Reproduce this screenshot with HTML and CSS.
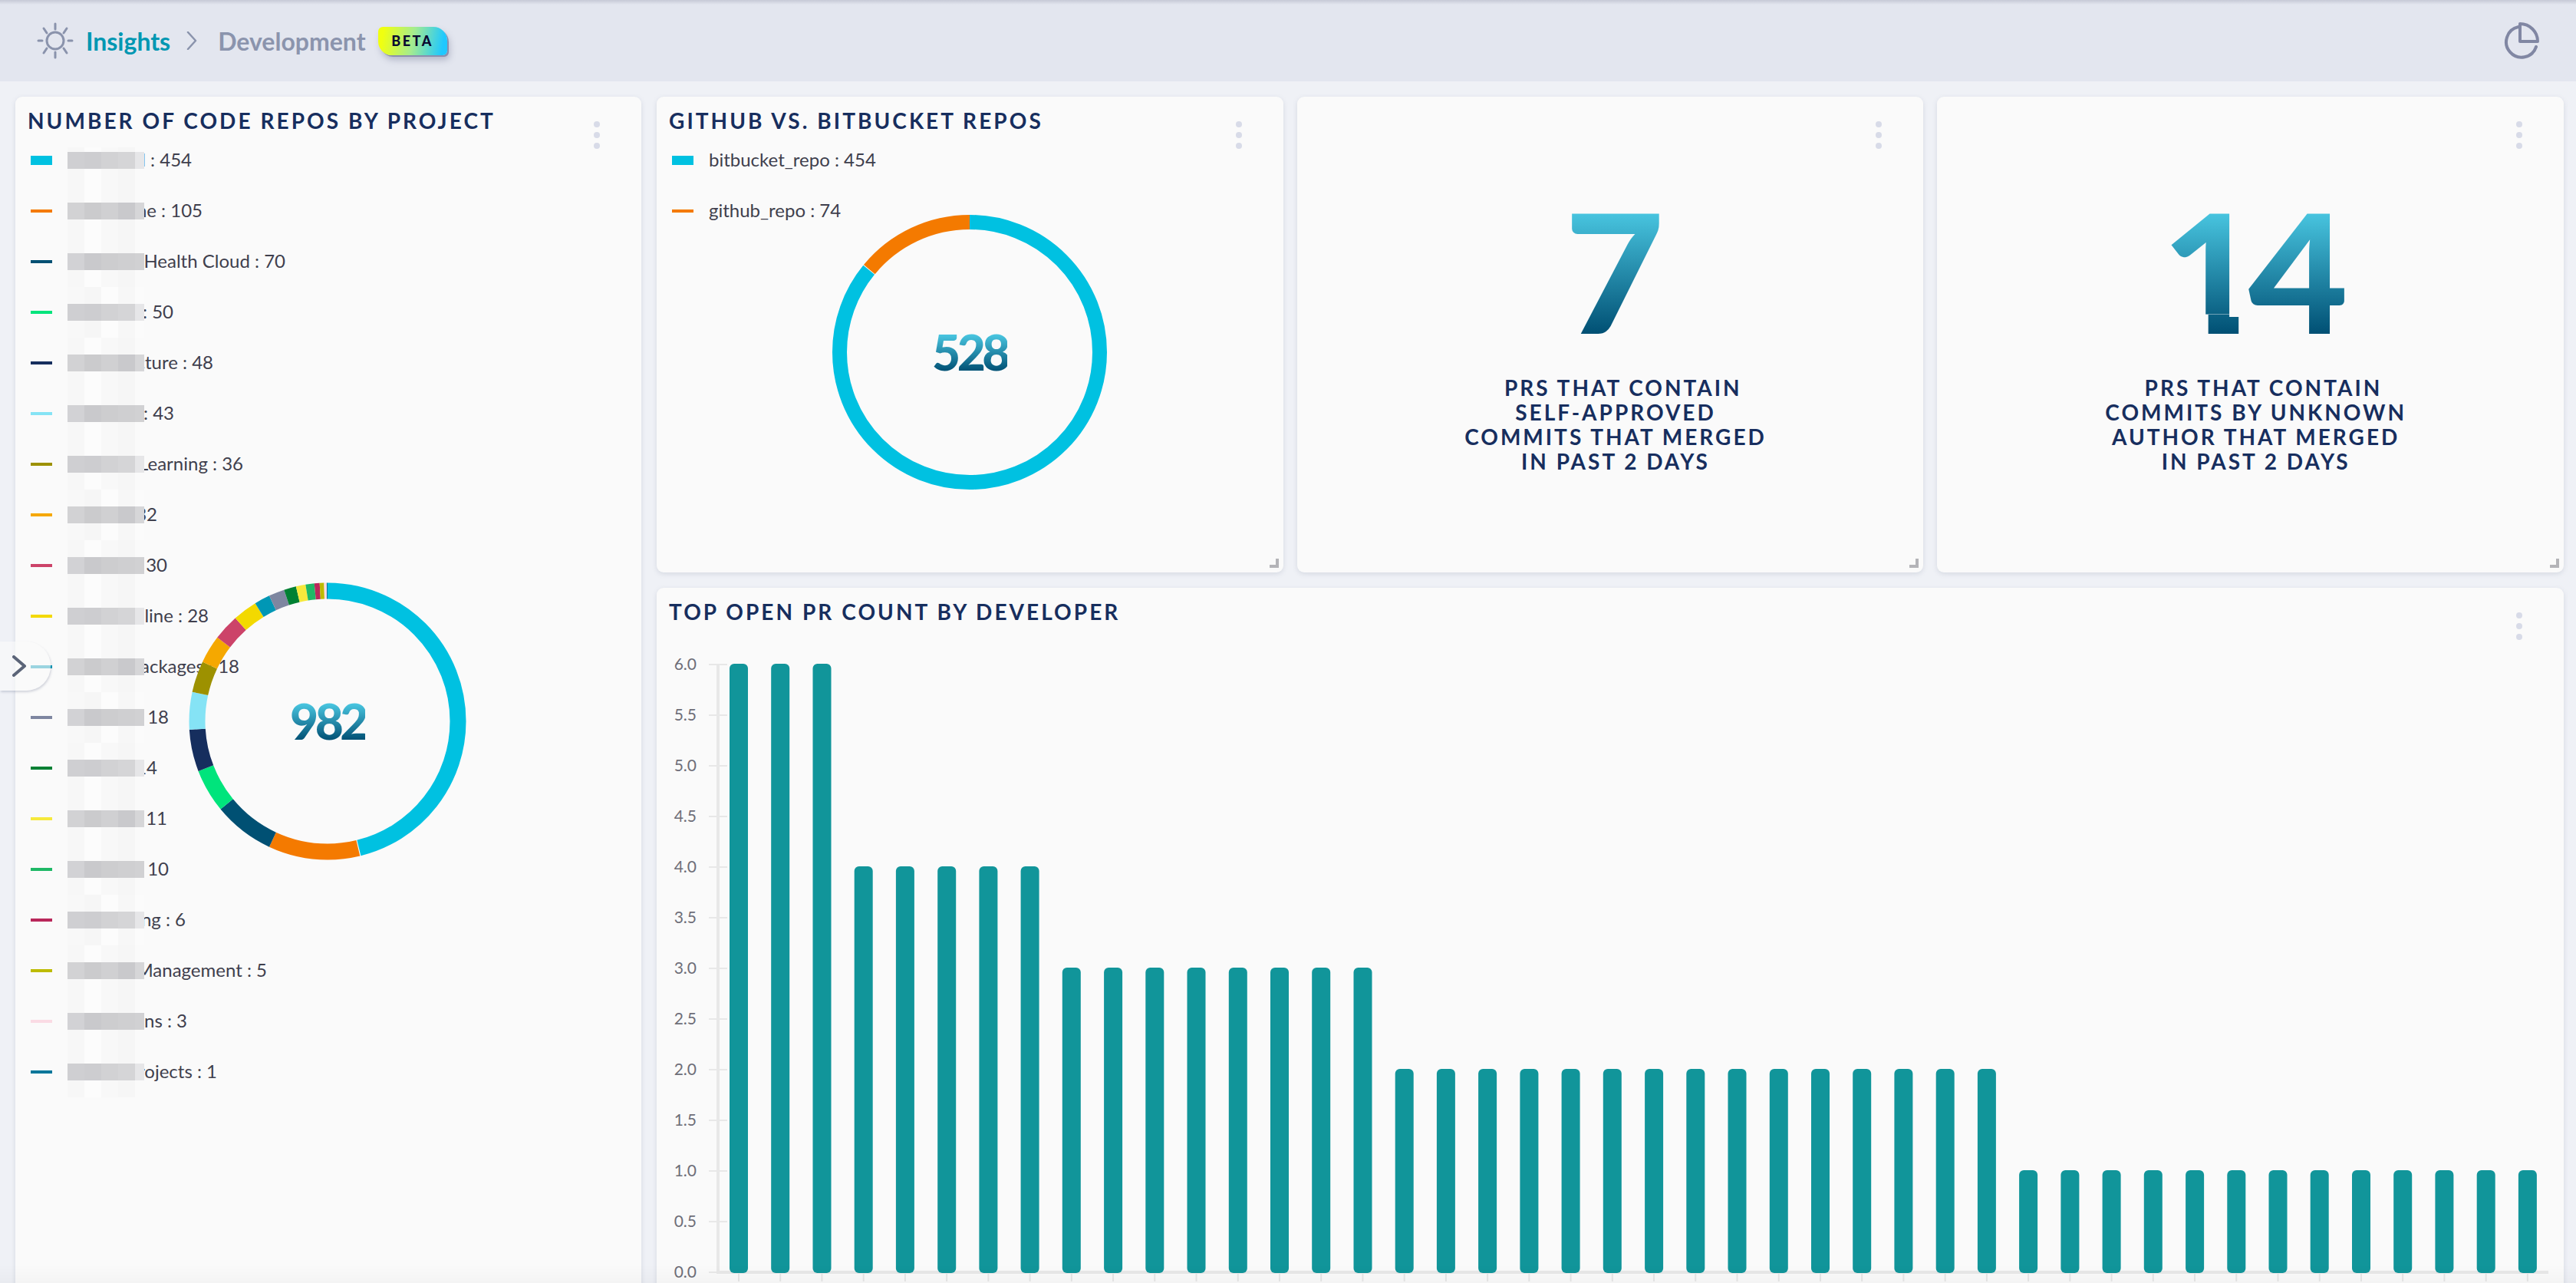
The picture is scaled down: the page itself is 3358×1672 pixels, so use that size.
FILE: index.html
```html
<!DOCTYPE html>
<html lang="en">
<head>
    <meta charset="UTF-8">
    <meta name="viewport" content="width=device-width, initial-scale=1.0">
    <title>Insights - Development</title>
    <link rel="stylesheet" href="styles.css">
</head>
<body>
<header class="topbar">
    <nav class="crumbs">
        <svg class="sun-icon" viewBox="0 0 48 48" fill="none" stroke="#8a93ac" stroke-width="3" stroke-linecap="round">
            <circle cx="24" cy="24" r="11"/>
            <path d="M24 2v7M24 39v7M2 24h5M41 24h5M9 8l4 6M39 8l-4 6M9 40l4-6M39 40l-4-6"/>
        </svg>
        <a class="crumb-link">Insights</a>
        <svg class="crumb-sep" viewBox="0 0 14 24" fill="none" stroke="#8a93ac" stroke-width="2.5" stroke-linecap="round" stroke-linejoin="round">
            <path d="M2 1l10 11L2 23"/>
        </svg>
        <span class="crumb-current">Development</span>
        <span class="beta-badge">BETA</span>
    </nav>
    <svg class="pie-icon" viewBox="0 0 48 48" fill="none" stroke="#8187a3" stroke-width="4" stroke-linecap="round" stroke-linejoin="round">
        <path d="M21 6A20 20 0 1 0 44 32"/>
        <path d="M23 2v23h23A23 23 0 0 0 23 2z"/>
    </svg>
</header>

<main class="dashboard">
    <section class="card card-projects">
        <h2 class="card-title">Number of code repos by project</h2>
        <div class="kebab"><i></i><i></i><i></i></div>
        <ul class="legend">
            <li class="legend-row"><span class="swatch swatch-first c1"></span><span class="legend-text">d : 454</span><span class="mask"></span></li>
            <li class="legend-row"><span class="swatch c2"></span><span class="legend-text">ne : 105</span><span class="mask"></span></li>
            <li class="legend-row"><span class="swatch c3"></span><span class="legend-text">Health Cloud : 70</span><span class="mask"></span></li>
            <li class="legend-row"><span class="swatch c4"></span><span class="legend-text">: 50</span><span class="mask"></span></li>
            <li class="legend-row"><span class="swatch c5"></span><span class="legend-text">cture : 48</span><span class="mask"></span></li>
            <li class="legend-row"><span class="swatch c6"></span><span class="legend-text">: 43</span><span class="mask"></span></li>
            <li class="legend-row"><span class="swatch c7"></span><span class="legend-text">Learning : 36</span><span class="mask"></span></li>
            <li class="legend-row"><span class="swatch c8"></span><span class="legend-text">: 32</span><span class="mask"></span></li>
            <li class="legend-row"><span class="swatch c9"></span><span class="legend-text">: 30</span><span class="mask"></span></li>
            <li class="legend-row"><span class="swatch c10"></span><span class="legend-text">eline : 28</span><span class="mask"></span></li>
            <li class="legend-row"><span class="swatch c11"></span><span class="legend-text">ackages : 18</span><span class="mask"></span></li>
            <li class="legend-row"><span class="swatch c12"></span><span class="legend-text">: 18</span><span class="mask"></span></li>
            <li class="legend-row"><span class="swatch c13"></span><span class="legend-text">: 14</span><span class="mask"></span></li>
            <li class="legend-row"><span class="swatch c14"></span><span class="legend-text">: 11</span><span class="mask"></span></li>
            <li class="legend-row"><span class="swatch c15"></span><span class="legend-text">: 10</span><span class="mask"></span></li>
            <li class="legend-row"><span class="swatch c16"></span><span class="legend-text">ng : 6</span><span class="mask"></span></li>
            <li class="legend-row"><span class="swatch c17"></span><span class="legend-text">Management : 5</span><span class="mask"></span></li>
            <li class="legend-row"><span class="swatch c18"></span><span class="legend-text">ns : 3</span><span class="mask"></span></li>
            <li class="legend-row"><span class="swatch c19"></span><span class="legend-text">rojects : 1</span><span class="mask"></span></li>
        </ul>
        <div class="donut donut-projects">
            <svg viewBox="0 0 362 362" fill="none" stroke-width="21">
                <g transform="rotate(-90 181 181)">
                    <circle cx="181" cy="181" r="170" pathLength="982" stroke="#00c1e1" stroke-dasharray="453 982"/>
                    <circle cx="181" cy="181" r="170" pathLength="982" stroke="#f47a00" stroke-dasharray="105 982" stroke-dashoffset="-454"/>
                    <circle cx="181" cy="181" r="170" pathLength="982" stroke="#005073" stroke-dasharray="70 982" stroke-dashoffset="-559"/>
                    <circle cx="181" cy="181" r="170" pathLength="982" stroke="#00e47c" stroke-dasharray="50 982" stroke-dashoffset="-629"/>
                    <circle cx="181" cy="181" r="170" pathLength="982" stroke="#162e5e" stroke-dasharray="48 982" stroke-dashoffset="-679"/>
                    <circle cx="181" cy="181" r="170" pathLength="982" stroke="#85e3f5" stroke-dasharray="43 982" stroke-dashoffset="-727"/>
                    <circle cx="181" cy="181" r="170" pathLength="982" stroke="#9d9100" stroke-dasharray="36 982" stroke-dashoffset="-770"/>
                    <circle cx="181" cy="181" r="170" pathLength="982" stroke="#f5a800" stroke-dasharray="32 982" stroke-dashoffset="-806"/>
                    <circle cx="181" cy="181" r="170" pathLength="982" stroke="#cc4369" stroke-dasharray="30 982" stroke-dashoffset="-838"/>
                    <circle cx="181" cy="181" r="170" pathLength="982" stroke="#f3d900" stroke-dasharray="28 982" stroke-dashoffset="-868"/>
                    <circle cx="181" cy="181" r="170" pathLength="982" stroke="#0097b5" stroke-dasharray="18 982" stroke-dashoffset="-896"/>
                    <circle cx="181" cy="181" r="170" pathLength="982" stroke="#7e86a0" stroke-dasharray="18 982" stroke-dashoffset="-914"/>
                    <circle cx="181" cy="181" r="170" pathLength="982" stroke="#008033" stroke-dasharray="14 982" stroke-dashoffset="-932"/>
                    <circle cx="181" cy="181" r="170" pathLength="982" stroke="#f6e93c" stroke-dasharray="11 982" stroke-dashoffset="-946"/>
                    <circle cx="181" cy="181" r="170" pathLength="982" stroke="#1eb866" stroke-dasharray="10 982" stroke-dashoffset="-957"/>
                    <circle cx="181" cy="181" r="170" pathLength="982" stroke="#b9275a" stroke-dasharray="6 982" stroke-dashoffset="-967"/>
                    <circle cx="181" cy="181" r="170" pathLength="982" stroke="#bdbb00" stroke-dasharray="5 982" stroke-dashoffset="-973"/>
                    <circle cx="181" cy="181" r="170" pathLength="982" stroke="#fadbe4" stroke-dasharray="3 982" stroke-dashoffset="-978"/>
                    <circle cx="181" cy="181" r="170" pathLength="982" stroke="#00769a" stroke-dasharray="1 982" stroke-dashoffset="-981"/>
                </g>
            </svg>
            <span class="donut-value gradient-text">982</span>
        </div>
    </section>

    <div class="right-grid">
        <section class="card">
            <h2 class="card-title">GitHub vs. Bitbucket repos</h2>
            <div class="kebab"><i></i><i></i><i></i></div>
            <ul class="legend">
                <li class="legend-row"><span class="swatch swatch-first c1"></span><span class="legend-plain">bitbucket_repo : 454</span></li>
                <li class="legend-row"><span class="swatch c2"></span><span class="legend-plain">github_repo : 74</span></li>
            </ul>
            <div class="donut donut-repos">
                <svg viewBox="0 0 362 362" fill="none" stroke-width="19">
                    <g transform="rotate(-90 181 181)">
                        <circle cx="181" cy="181" r="169.5" pathLength="528" stroke="#00c1e1" stroke-dasharray="453.5 528"/>
                        <circle cx="181" cy="181" r="169.5" pathLength="528" stroke="#f47a00" stroke-dasharray="74 528" stroke-dashoffset="-454"/>
                    </g>
                </svg>
                <span class="donut-value gradient-text">528</span>
            </div>
            <span class="resize-handle"></span>
        </section>

        <section class="card stat-card">
            <div class="kebab"><i></i><i></i><i></i></div>
            <div class="stat-number"><span class="gradient-text">7</span></div>
            <p class="stat-label">&nbsp;&nbsp;PRs that contain<br>self-approved<br>commits that merged<br>in past 2 days</p>
            <span class="resize-handle"></span>
        </section>

        <section class="card stat-card">
            <div class="kebab"><i></i><i></i><i></i></div>
            <div class="stat-number"><span class="gradient-text digit-one">1</span><span class="gradient-text">4</span></div>
            <p class="stat-label">&nbsp;&nbsp;PRs that contain<br>commits by unknown<br>author that merged<br>in past 2 days</p>
            <span class="resize-handle"></span>
        </section>

        <section class="card card-wide">
            <h2 class="card-title">Top open PR count by developer</h2>
            <div class="kebab"><i></i><i></i><i></i></div>
            <!-- viewBox uses page coordinates so the bars are easy to check against the design -->
            <svg class="bar-chart" viewBox="856 846 2486 826">
                <defs>
                    <pattern id="xTicks" x="962" y="1660" width="54.23" height="10" patternUnits="userSpaceOnUse">
                        <rect width="2" height="10" fill="#e6e6e6"/>
                    </pattern>
                </defs>
                <rect x="934" y="866" width="4" height="794" fill="#e8e8e8"/>
                <rect x="934" y="1656" width="2388" height="4" fill="#e8e8e8"/>
                <rect x="950" y="1660" width="2350" height="10" fill="url(#xTicks)"/>
                <g class="y-ticks">
                    <rect x="924" y="865" width="24" height="2"/><rect x="924" y="931" width="24" height="2"/><rect x="924" y="997" width="24" height="2"/>
                    <rect x="924" y="1063" width="24" height="2"/><rect x="924" y="1129" width="24" height="2"/><rect x="924" y="1195" width="24" height="2"/>
                    <rect x="924" y="1261" width="24" height="2"/><rect x="924" y="1327" width="24" height="2"/><rect x="924" y="1393" width="24" height="2"/>
                    <rect x="924" y="1459" width="24" height="2"/><rect x="924" y="1525" width="24" height="2"/><rect x="924" y="1591" width="24" height="2"/>
                    <rect x="924" y="1657" width="24" height="2"/>
                </g>
                <g class="y-labels">
                    <text x="908" y="873">6.0</text><text x="908" y="939">5.5</text><text x="908" y="1005">5.0</text>
                    <text x="908" y="1071">4.5</text><text x="908" y="1137">4.0</text><text x="908" y="1203">3.5</text>
                    <text x="908" y="1269">3.0</text><text x="908" y="1335">2.5</text><text x="908" y="1401">2.0</text>
                    <text x="908" y="1467">1.5</text><text x="908" y="1533">1.0</text><text x="908" y="1599">0.5</text>
                    <text x="908" y="1665">0.0</text>
                </g>
                <g class="bars">
                    <rect x="951.0" y="865" width="24" height="794" rx="6"/>
                    <rect x="1005.2" y="865" width="24" height="794" rx="6"/>
                    <rect x="1059.5" y="865" width="24" height="794" rx="6"/>
                    <rect x="1113.7" y="1129" width="24" height="530" rx="6"/>
                    <rect x="1167.9" y="1129" width="24" height="530" rx="6"/>
                    <rect x="1222.2" y="1129" width="24" height="530" rx="6"/>
                    <rect x="1276.4" y="1129" width="24" height="530" rx="6"/>
                    <rect x="1330.6" y="1129" width="24" height="530" rx="6"/>
                    <rect x="1384.8" y="1261" width="24" height="398" rx="6"/>
                    <rect x="1439.1" y="1261" width="24" height="398" rx="6"/>
                    <rect x="1493.3" y="1261" width="24" height="398" rx="6"/>
                    <rect x="1547.5" y="1261" width="24" height="398" rx="6"/>
                    <rect x="1601.8" y="1261" width="24" height="398" rx="6"/>
                    <rect x="1656.0" y="1261" width="24" height="398" rx="6"/>
                    <rect x="1710.2" y="1261" width="24" height="398" rx="6"/>
                    <rect x="1764.5" y="1261" width="24" height="398" rx="6"/>
                    <rect x="1818.7" y="1393" width="24" height="266" rx="6"/>
                    <rect x="1872.9" y="1393" width="24" height="266" rx="6"/>
                    <rect x="1927.1" y="1393" width="24" height="266" rx="6"/>
                    <rect x="1981.4" y="1393" width="24" height="266" rx="6"/>
                    <rect x="2035.6" y="1393" width="24" height="266" rx="6"/>
                    <rect x="2089.8" y="1393" width="24" height="266" rx="6"/>
                    <rect x="2144.1" y="1393" width="24" height="266" rx="6"/>
                    <rect x="2198.3" y="1393" width="24" height="266" rx="6"/>
                    <rect x="2252.5" y="1393" width="24" height="266" rx="6"/>
                    <rect x="2306.8" y="1393" width="24" height="266" rx="6"/>
                    <rect x="2361.0" y="1393" width="24" height="266" rx="6"/>
                    <rect x="2415.2" y="1393" width="24" height="266" rx="6"/>
                    <rect x="2469.4" y="1393" width="24" height="266" rx="6"/>
                    <rect x="2523.7" y="1393" width="24" height="266" rx="6"/>
                    <rect x="2577.9" y="1393" width="24" height="266" rx="6"/>
                    <rect x="2632.1" y="1525" width="24" height="134" rx="6"/>
                    <rect x="2686.4" y="1525" width="24" height="134" rx="6"/>
                    <rect x="2740.6" y="1525" width="24" height="134" rx="6"/>
                    <rect x="2794.8" y="1525" width="24" height="134" rx="6"/>
                    <rect x="2849.1" y="1525" width="24" height="134" rx="6"/>
                    <rect x="2903.3" y="1525" width="24" height="134" rx="6"/>
                    <rect x="2957.5" y="1525" width="24" height="134" rx="6"/>
                    <rect x="3011.7" y="1525" width="24" height="134" rx="6"/>
                    <rect x="3066.0" y="1525" width="24" height="134" rx="6"/>
                    <rect x="3120.2" y="1525" width="24" height="134" rx="6"/>
                    <rect x="3174.4" y="1525" width="24" height="134" rx="6"/>
                    <rect x="3228.7" y="1525" width="24" height="134" rx="6"/>
                    <rect x="3282.9" y="1525" width="24" height="134" rx="6"/>
                </g>
            </svg>
        </section>
    </div>
</main>

<button class="sidebar-toggle" type="button">
    <svg viewBox="0 0 20 28" fill="none" stroke="#5b6478" stroke-width="4" stroke-linecap="round" stroke-linejoin="round">
        <path d="M2 2l14 12L2 26"/>
    </svg>
</button>
</body>
</html>
```

FILE: styles.css
```css
* {
    box-sizing: border-box;
}

html, body {
    height: 100%;
}

body {
    margin: 0;
    overflow: hidden;
    background-color: #eff1f6;
    font-family: "Lato", "Noto Sans", sans-serif;
    color: #3f3f4d;
}

/* Slight fade along the bottom edge of the window */
body::after {
    content: "";
    position: fixed;
    left: 0;
    right: 0;
    bottom: 0;
    height: 24px;
    background: linear-gradient(rgba(0, 0, 0, 0), rgba(0, 0, 0, 0.025));
    pointer-events: none;
}

/* Top bar */
.topbar {
    height: 106px;
    padding: 0 48px 0 48px;
    display: flex;
    align-items: center;
    justify-content: space-between;
    background: linear-gradient(#c6c9d6 0, #e3e6ef 6px);
}

.crumbs {
    display: flex;
    align-items: center;
    font-size: 32px;
    font-weight: 700;
}

.sun-icon {
    width: 48px;
    height: 48px;
    margin-right: 16px;
}

.crumb-link {
    color: #0097b2;
}

.crumb-sep {
    width: 14px;
    height: 24px;
    margin: 0 27px 0 21px;
}

.crumb-current {
    color: #8b94ad;
}

.beta-badge {
    margin-left: 16px;
    width: 90px;
    height: 37px;
    display: flex;
    align-items: center;
    justify-content: center;
    font-size: 18px;
    font-weight: 900;
    letter-spacing: 0.14em;
    color: #0a0a30;
    border-radius: 6px 18px 6px 18px;
    background: linear-gradient(100deg, #f0ff10 8%, #a4ec90 50%, #1fc8ff 92%);
    box-shadow: 2px 2px 0 #8a8fae, 3px 6px 8px rgba(90, 95, 130, 0.35);
}

.pie-icon {
    width: 48px;
    height: 48px;
}

/* Page grid */
.dashboard {
    display: grid;
    grid-template-columns: 816px 1fr;
    gap: 20px;
    padding: 20px 16px 0 20px;
}

.right-grid {
    display: grid;
    grid-template-columns: repeat(3, 1fr);
    grid-template-rows: 620px 940px;
    column-gap: 18px;
    row-gap: 20px;
}

.card {
    position: relative;
    background-color: #fafafa;
    border-radius: 9px;
    box-shadow: 0 2px 6px rgba(100, 110, 140, 0.18);
}

.card-projects {
    height: 1600px;
}

.card-wide {
    grid-column: 1 / 4;
}

.card-title {
    margin: 0;
    padding: 14px 16px 0;
    font-size: 28px;
    line-height: 34px;
    font-weight: 700;
    letter-spacing: 3.05px;
    text-transform: uppercase;
    color: #172e5e;
}

.kebab {
    position: absolute;
    top: 32px;
    right: 54px;
    display: flex;
    flex-direction: column;
    gap: 6px;
}

.kebab i {
    width: 8px;
    height: 8px;
    border-radius: 50%;
    background-color: #d8dbe8;
}

.resize-handle {
    position: absolute;
    right: 6px;
    bottom: 6px;
    width: 12px;
    height: 12px;
    border-right: 4px solid #b4b4b8;
    border-bottom: 4px solid #b4b4b8;
}

/* Legends */
.legend {
    list-style: none;
    margin: 2px 0 0 20px;
    padding: 0;
}

.legend-row {
    position: relative;
    height: 66px;
    display: flex;
    align-items: center;
    font-size: 24px;
}

.swatch {
    flex: none;
    width: 28px;
    height: 4px;
    margin-right: 20px;
}

.swatch-first {
    height: 12px;
}

.c1 { background-color: #00c1e1; }
.c2 { background-color: #f47a00; }
.c3 { background-color: #005073; }
.c4 { background-color: #00e47c; }
.c5 { background-color: #162e5e; }
.c6 { background-color: #85e3f5; }
.c7 { background-color: #9d9100; }
.c8 { background-color: #f5a800; }
.c9 { background-color: #cc4369; }
.c10 { background-color: #f3d900; }
.c11 { background-color: #0097b5; }
.c12 { background-color: #7e86a0; }
.c13 { background-color: #008033; }
.c14 { background-color: #f6e93c; }
.c15 { background-color: #1eb866; }
.c16 { background-color: #b9275a; }
.c17 { background-color: #bdbb00; }
.c18 { background-color: #fadbe4; }
.c19 { background-color: #00769a; }

.legend-plain {
    margin-top: -4px;
    white-space: nowrap;
}

/* Text is right aligned so each row ends where the visible part of its label ends */
.legend-text {
    margin-top: -4px;
    text-align: right;
    white-space: nowrap;
}

.legend-row:nth-child(1) .legend-text { width: 162px; }
.legend-row:nth-child(2) .legend-text { width: 176px; }
.legend-row:nth-child(3) .legend-text { width: 284px; }
.legend-row:nth-child(4) .legend-text { width: 138px; }
.legend-row:nth-child(5) .legend-text { width: 190px; }
.legend-row:nth-child(6) .legend-text { width: 139px; }
.legend-row:nth-child(7) .legend-text { width: 229px; }
.legend-row:nth-child(8) .legend-text { width: 117px; }
.legend-row:nth-child(9) .legend-text { width: 130px; }
.legend-row:nth-child(10) .legend-text { width: 184px; }
.legend-row:nth-child(11) .legend-text { width: 224px; }
.legend-row:nth-child(12) .legend-text { width: 132px; }
.legend-row:nth-child(13) .legend-text { width: 117px; }
.legend-row:nth-child(14) .legend-text { width: 130px; }
.legend-row:nth-child(15) .legend-text { width: 132px; }
.legend-row:nth-child(16) .legend-text { width: 154px; }
.legend-row:nth-child(17) .legend-text { width: 260px; }
.legend-row:nth-child(18) .legend-text { width: 156px; }
.legend-row:nth-child(19) .legend-text { width: 195px; }

/* Pixelated cover over the project names */
.mask {
    position: absolute;
    left: 48px;
    top: 0;
    width: 100px;
    height: 66px;
    background: linear-gradient(90deg, #f7f7f7 0 22px, #fcfcfc 22px 44px, #f8f8f8 44px 66px, #f6f6f6 66px 88px, #fafafa 88px);
}

.mask::after {
    content: "";
    position: absolute;
    left: 0;
    top: 22px;
    width: 100%;
    height: 22px;
    background: linear-gradient(90deg, #d2d2d5 0 22px, #c9c9cc 22px 44px, #cdcdcf 44px 66px, #cfcfd1 66px 88px, #d1d1d3 88px);
}

.legend-row:nth-child(3n+1) .mask::after {
    background: linear-gradient(90deg, #cfcfd2 0 22px, #cdcdd0 22px 44px, #d2d2d4 44px 66px, #d5d5d7 66px 88px, #e6e6e8 88px);
}

.legend-row:nth-child(3n+2) .mask::after {
    background: linear-gradient(90deg, #d2d2d4 0 22px, #cbcbcd 22px 44px, #d0d0d2 44px 66px, #c9c9cc 66px 88px, #d6d6d8 88px);
}

.legend-row:nth-child(4n) .mask {
    background: linear-gradient(90deg, #f8f8f8 0 22px, #f6f6f6 22px 44px, #fcfcfc 44px 66px, #f7f7f7 66px 88px, #fbfbfb 88px);
}

.legend-row:first-child .mask {
    top: 16px;
    height: 50px;
}

.legend-row:first-child .mask::after {
    top: 6px;
}

/* Donuts */
.donut {
    position: absolute;
    width: 362px;
    height: 362px;
    display: flex;
    align-items: center;
    justify-content: center;
}

.donut svg {
    position: absolute;
    left: 0;
    top: 0;
    width: 100%;
    height: 100%;
}

.donut-projects {
    left: 226px;
    top: 633px;
}

.donut-repos {
    left: 227px;
    top: 152px;
}

.donut-value {
    position: relative;
    font-size: 64px;
    line-height: 0.8;
    font-weight: 900;
    letter-spacing: -0.07em;
}

.gradient-text {
    background: linear-gradient(#47c3de 8%, #004f73 98%);
    -webkit-background-clip: text;
    background-clip: text;
    color: transparent;
}

/* Stat cards */
.stat-card {
    padding: 140px 0 0 14px;
    display: flex;
    flex-direction: column;
    align-items: center;
}

.stat-number {
    display: flex;
    height: 173px;
    margin-left: -3px;
    font-size: 216px;
    line-height: 0.8;
    font-weight: 900;
    transform: scaleX(1.04);
}

/* The reference 1 has no foot, so only the stem is shown at the baseline */
.digit-one {
    letter-spacing: -16px;
    -webkit-mask: linear-gradient(#000, #000) top / 100% 83% no-repeat,
                  linear-gradient(#000, #000) 59px bottom / 38px 17% no-repeat;
    mask: linear-gradient(#000, #000) top / 100% 83% no-repeat,
          linear-gradient(#000, #000) 59px bottom / 38px 17% no-repeat;
}

.stat-label {
    margin: 50px 0 0;
    font-size: 28px;
    line-height: 32px;
    font-weight: 700;
    letter-spacing: 3px;
    text-align: center;
    text-transform: uppercase;
    color: #172e5e;
}

/* Bar chart */
.bar-chart {
    display: block;
    width: 100%;
    height: 826px;
    margin-top: 32px;
}

.bars rect {
    fill: #11959a;
}

.y-ticks rect {
    fill: #e8e8e8;
}

.y-labels text {
    font-size: 21px;
    fill: #6e6e78;
    text-anchor: end;
}

/* Collapsed sidebar toggle */
.sidebar-toggle {
    position: absolute;
    left: 0;
    top: 836px;
    width: 66px;
    height: 64px;
    padding: 0 0 0 16px;
    display: flex;
    align-items: center;
    border: 0;
    border-radius: 0 32px 32px 0;
    background-color: rgba(250, 250, 250, 0.62);
    box-shadow: 1px 2px 3px rgba(90, 100, 130, 0.25);
}

.sidebar-toggle svg {
    width: 20px;
    height: 28px;
}
```
